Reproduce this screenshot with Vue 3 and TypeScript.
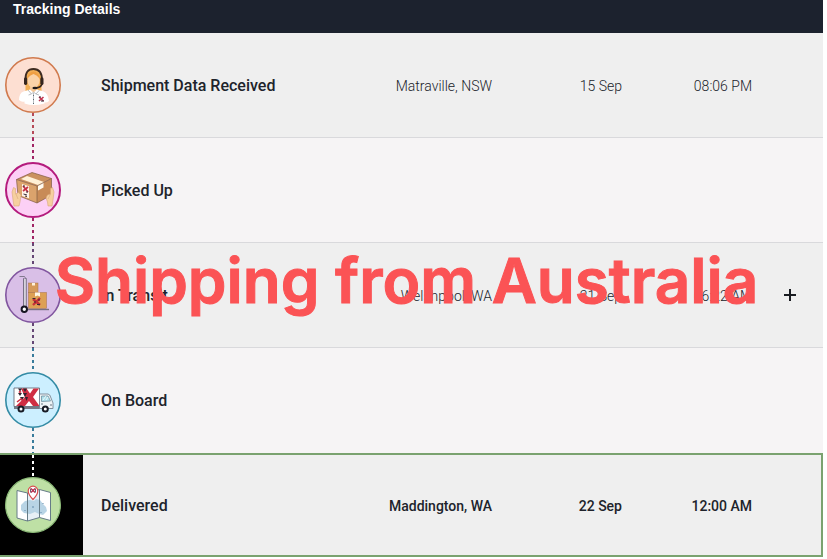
<script setup lang="ts">
type IconName = 'agent' | 'parcel' | 'trolley' | 'truck' | 'map'

interface TrackingStep {
  icon: IconName
  title: string
  location?: string
  date?: string
  time?: string
  expandable?: boolean
  current?: boolean
}

const steps: TrackingStep[] = [
  { icon: 'agent', title: 'Shipment Data Received', location: 'Matraville, NSW', date: '15 Sep', time: '08:06 PM' },
  { icon: 'parcel', title: 'Picked Up' },
  { icon: 'trolley', title: 'In Transit', location: 'Welshpool, WA', date: '21 Sep', time: '06:22 AM', expandable: true },
  { icon: 'truck', title: 'On Board' },
  { icon: 'map', title: 'Delivered', location: 'Maddington, WA', date: '22 Sep', time: '12:00 AM', current: true },
]
</script>

<template>
  <main class="tracking">
    <header class="bar"><h1>Tracking Details</h1></header>

    <table class="steps">
      <colgroup>
        <col class="col-icon" />
        <col />
        <col />
        <col class="col-when" />
        <col class="col-when" />
        <col class="col-action" />
      </colgroup>
      <tbody>
        <tr v-for="step in steps" :key="step.title" :class="[step.icon, { current: step.current }]">
          <td class="marker">
            <svg class="icon" viewBox="0 0 56 56" aria-hidden="true">
              <g v-if="step.icon === 'agent'">
                <circle cx="28" cy="28" r="27.2" fill="#fddfd2" stroke="#d07a4e" stroke-width="1.6" />
                <path d="M20.5 34V20q0-8.500 8-8.500t8 8.500v14z" fill="#f2ae55" />
                <path d="M25 27h7v7l-3.500 2-3.500-2z" fill="#f6c795" />
                <ellipse cx="28.5" cy="23.5" rx="6.2" ry="7.2" fill="#fbd3a8" />
                <path d="M22 22q1-7 6.500-7.500Q34 15 35 22q-3-4-6.500-5Q25 18 22 22z" fill="#ef9f43" />
                <path d="M14 43q0-7 4.500-8.500l6.500-2 3.500 3 3.500-3 6.500 2q4.500 1.500 5.500 9.500-2 2-4.500 1.500v1q-11 3-20 0v-2q-3 1-5.500-1.500z" fill="#fff" />
                <path d="M23 33l3.500 4 2-2 2.500 2 3.500-4M28.500 36v11M23.500 38l3-1M31 37l3 1" fill="none" stroke="#a9aeb4" stroke-width=".8" />
                <path d="M28.500 38v1M28.500 42v1M28.500 46v1" stroke="#555d66" stroke-width=".9" />
                <path d="M20.500 23Q20 12 28.500 12t8.500 11" fill="none" stroke="#3d2b22" stroke-width="1.8" />
                <rect x="19" y="20.5" width="3.2" height="7.500" rx="1.400" fill="#35251f" />
                <rect x="35.300" y="20.5" width="3.200" height="7.500" rx="1.400" fill="#35251f" />
                <path d="M37 27q-1 3.500-6 4" fill="none" stroke="#35251f" stroke-width="1.500" />
                <ellipse cx="30" cy="31" rx="2.600" ry="1.300" fill="#211c1c" />
                <path d="M34 40l4.500 4M38.500 40L34 44" stroke="#c5354f" stroke-width="1.600" />
                <path d="M34 40h2M36 44h3" stroke="#342a38" stroke-width="1" />
              </g>

              <g v-else-if="step.icon === 'parcel'">
                <circle cx="28" cy="28" r="27" fill="#fcd0f5" stroke="#b41b7d" stroke-width="2" />
                <path d="M11.500 17.500L32 24v17l-19-7.500z" fill="#dba36c" />
                <path d="M32 24l14.500-7.500V33L32 41z" fill="#c88b57" />
                <path d="M11.500 17.500L27 10.500l19.500 6L32 24z" fill="#ca9160" />
                <path d="M16 17l6-3 17 6-6 3z" fill="#fff0d6" />
                <path d="M33 23.500l5.500-3v5l-5.500 3z" fill="#fffaf0" />
                <path d="M11.500 17.500L27 10.500l19.500 6V33L32 41l-19-7.500zM11.500 17.500L32 24v17M32 24l14.500-7.500" fill="none" stroke="#805b43" stroke-width=".7" />
                <path d="M17 22l7 2.200v12L17 34z" fill="#fff3ea" />
                <path d="M18 24l5 6M23 25l-5 4" stroke="#c52f45" stroke-width="1.700" />
                <path d="M18 24h2M21 30h2M18.500 32l3.500 1M20 34l2 .5" stroke="#392c37" stroke-width="1" />
                <path d="M9 44l-1-6-1-8 1.500-4.500 2 1V32l3-1.500 2.500 2.500-1 7-1 4z" fill="#f6cf9f" stroke="#d9a878" stroke-width=".6" />
                <path d="M47 44l1-6 1-8-1.500-4.500-2 1V32l-3 1-1.500 3 1.500 4 .5 4z" fill="#f6cf9f" stroke="#d9a878" stroke-width=".6" />
                <path d="M11 32l2 5M45.500 32L43 37" stroke="#d9a878" stroke-width=".6" />
              </g>

              <g v-else-if="step.icon === 'trolley'">
                <circle cx="28" cy="28" r="27.200" fill="#d9bfe7" stroke="#81569f" stroke-width="1.600" />
                <path d="M14.500 9.500h5L21 12v28M18.500 12v28M18.500 12H21M18.500 18H21" fill="none" stroke="#777083" stroke-width=".9" />
                <path d="M19 12h2v27h-2z" fill="#d7d1dc" />
                <path d="M18.500 11v28M21.300 11v28" stroke="#777083" stroke-width=".7" />
                <rect x="23.500" y="16" width="9.500" height="9.500" fill="#d69a5a" stroke="#a87349" stroke-width=".5" />
                <rect x="27" y="16" width="3" height="2.500" fill="#fff2dc" />
                <rect x="23.500" y="25.500" width="18" height="16" fill="#dda054" stroke="#a87349" stroke-width=".5" />
                <path d="M30 25.500h5v4l-2.500-1-2.500 1z" fill="#fff7e6" />
                <path d="M28 32l7 6M35 31l-7 7" stroke="#c53038" stroke-width="2.400" />
                <path d="M27.500 31.500h3M32 37.500h3M29 35h2M33 33h2" stroke="#392933" stroke-width="1" />
                <path d="M21 42.500h23" stroke="#777083" stroke-width="1.400" />
                <circle cx="19.300" cy="42.300" r="2.700" fill="#fff" stroke="#171522" stroke-width="2" />
              </g>

              <g v-else-if="step.icon === 'truck'">
                <circle cx="28" cy="28" r="27.200" fill="#ccefff" stroke="#348ba5" stroke-width="1.600" />
                <path d="M9 34.500h38v2.500H9z" fill="#757b88" />
                <path d="M9 16h25.500v18.500H9z" fill="#fff" stroke="#58616f" stroke-width=".8" />
                <path d="M16 16.500h5.500l3.500 5 3.500-5h5.500l-6 8.500 6.500 9h-6.500l-4-5-4 5H11l9-9z" fill="#cf2e43" />
                <path d="M13 16.500h4l-2 3zM18 16.500h4l-2 3.500zM13 21h4l-2 3zM18 21h4l-2 4zM15 25h4l-2 3.500zM20 25h3l-1.500 4z" fill="#30242f" />
                <path d="M14 20.500l1-1 1 1M12 30l4-3 2 2" fill="none" stroke="#cf2e43" stroke-width="1.5" />
                <path d="M34.500 22H43q2 0 3 4l2 5v5.500H34.500z" fill="#eef4f7" stroke="#788794" stroke-width=".9" />
                <path d="M36.500 24h6.500l2.500 5-9 .5z" fill="#aee1ed" stroke="#72909e" stroke-width=".8" />
                <path d="M38 28l3-4M41 28l2-3" stroke="#fff" stroke-width=".8" />
                <path d="M36 32h2M45 33h2" stroke="#687683" stroke-width="1" />
                <circle cx="16" cy="37" r="2.500" fill="#fff" stroke="#171b25" stroke-width="2" />
                <circle cx="40.300" cy="37" r="2.500" fill="#fff" stroke="#171b25" stroke-width="2" />
              </g>

              <g v-else>
                <circle cx="28" cy="28" r="27.400" fill="#bee0a5" stroke="#8dbb79" stroke-width="1.200" />
                <path d="M12 13.500L22.500 16v28L12 41z" fill="#fff" />
                <path d="M22.500 16l12-3.500v28l-12 3.500z" fill="#e7f0f6" />
                <path d="M34.500 12.500l11 3v28l-11-3z" fill="#fff" />
                <path d="M16 28l4-4 5-1 4 1 2-2 4 1 3 4 3 3 1 4-4 4-4-1-4-2-5 2-6-1-3-3z" fill="#b8d4e5" />
                <path d="M12 13.500L22.500 16l12-3.500 11 3v28l-11-3-12 3.500L12 41zM22.500 16v28M34.500 12.500v28" fill="none" stroke="#667c87" stroke-width="1" />
                <path d="M28 29v2M38 26v1M20 33v1M36 35v1" stroke="#628aab" stroke-width="1" />
                <path d="M28 22.500q-4.800-5-4.800-8.500a4.800 4.800 0 019.600 0q0 3.500-4.800 8.500z" fill="#fff" stroke="#d94b4b" stroke-width="1.200" />
                <path d="M26 11.500l4 4M30 11.500l-4 4" stroke="#b72949" stroke-width="1.300" />
                <path d="M25.500 11.500v4M30.500 11.500v4" stroke="#463d51" stroke-width=".8" />
              </g>
            </svg>
          </td>
          <th scope="row">{{ step.title }}</th>
          <td>{{ step.location }}</td>
          <td>{{ step.date }}</td>
          <td>{{ step.time }}</td>
          <td class="action">
            <button v-if="step.expandable" type="button" :aria-label="step.title">
              <svg viewBox="0 0 14 14" aria-hidden="true"><path d="M7 1v12M1 7h12" /></svg>
            </button>
          </td>
        </tr>
      </tbody>
    </table>

    <p class="caption">Shipping from Australia</p>
  </main>
</template>

<style>
body {
  margin: 0;
  background: #fff;
}
</style>

<style scoped>
.tracking {
  position: relative;
  margin-right: 4px;
  color: #20232b;
  font-family: Roboto, "Liberation Sans", sans-serif;
}

.bar {
  height: 33px;
  padding-left: 13px;
  background: #1c222e;
  color: #fff;
}

.bar h1 {
  margin: 0;
  font: bold 14px/18px "Liberation Sans", sans-serif;
}

.steps {
  width: 100%;
  table-layout: fixed;
  border-collapse: separate;
  border-spacing: 0;
}

.col-icon {
  width: 83px;
}

.col-when {
  width: 130px;
}

.col-action {
  width: 71px;
}

tr {
  background: #efefef;
}

tr:nth-child(even) {
  background: #f6f4f5;
}

th,
td {
  box-sizing: border-box;
  height: 105px;
  padding: 2px 0 0;
  border-bottom: 1px solid #d9d9dc;
  font-size: 14px;
  font-weight: 300;
  line-height: 20px;
  text-align: right;
  white-space: nowrap;
}

th {
  padding-left: 18px;
  font-size: 16px;
  font-weight: 500;
  text-align: left;
}

tr:nth-child(4) > * {
  border-bottom-color: transparent;
}

.current > * {
  height: 104px;
  border-top: 2px solid #7aa26f;
  border-bottom: 2px solid #7aa26f;
}

.current td {
  font-weight: 500;
}

.current td:last-child {
  border-right: 2px solid #7aa26f;
}

.current .marker {
  background: #000;
}

.marker {
  position: relative;
  padding: 0 0 0 5px;
  text-align: left;
}

.icon {
  position: relative;
  display: block;
  width: 56px;
  height: 56px;
}

.marker::before,
.marker::after {
  content: "";
  position: absolute;
  left: 32px;
  width: 2px;
  background: repeating-linear-gradient(var(--line) 0 3px, transparent 3px 6px);
}

.marker::before {
  top: 0;
  height: 24px;
}

.marker::after {
  top: 80px;
  bottom: -1px;
}

.agent .marker::before,
.map .marker::after {
  display: none;
}

.agent {
  --line: #b64a58;
}

.parcel {
  --line: #a12565;
}

.trolley {
  --line: #654775;
}

.truck {
  --line: #397b9b;
}

.map {
  --line: #fff;
}

.action {
  padding: 0 0 0 4px;
  text-align: center;
}

.action button {
  display: inline-flex;
  padding: 4px;
  border: 0;
  background: none;
  vertical-align: middle;
}

.action svg {
  width: 14px;
  height: 14px;
  fill: none;
  stroke: #191b20;
  stroke-width: 2;
}

.caption {
  position: absolute;
  top: 241px;
  left: 0;
  right: 0;
  margin: 0;
  padding-right: 10px;
  color: #fb5355;
  font-family: Inter, "Liberation Sans", sans-serif;
  font-size: 62px;
  font-weight: 600;
  line-height: 80px;
  text-align: center;
  white-space: nowrap;
  pointer-events: none;
  -webkit-text-stroke: 1px #fb5355;
}
</style>
